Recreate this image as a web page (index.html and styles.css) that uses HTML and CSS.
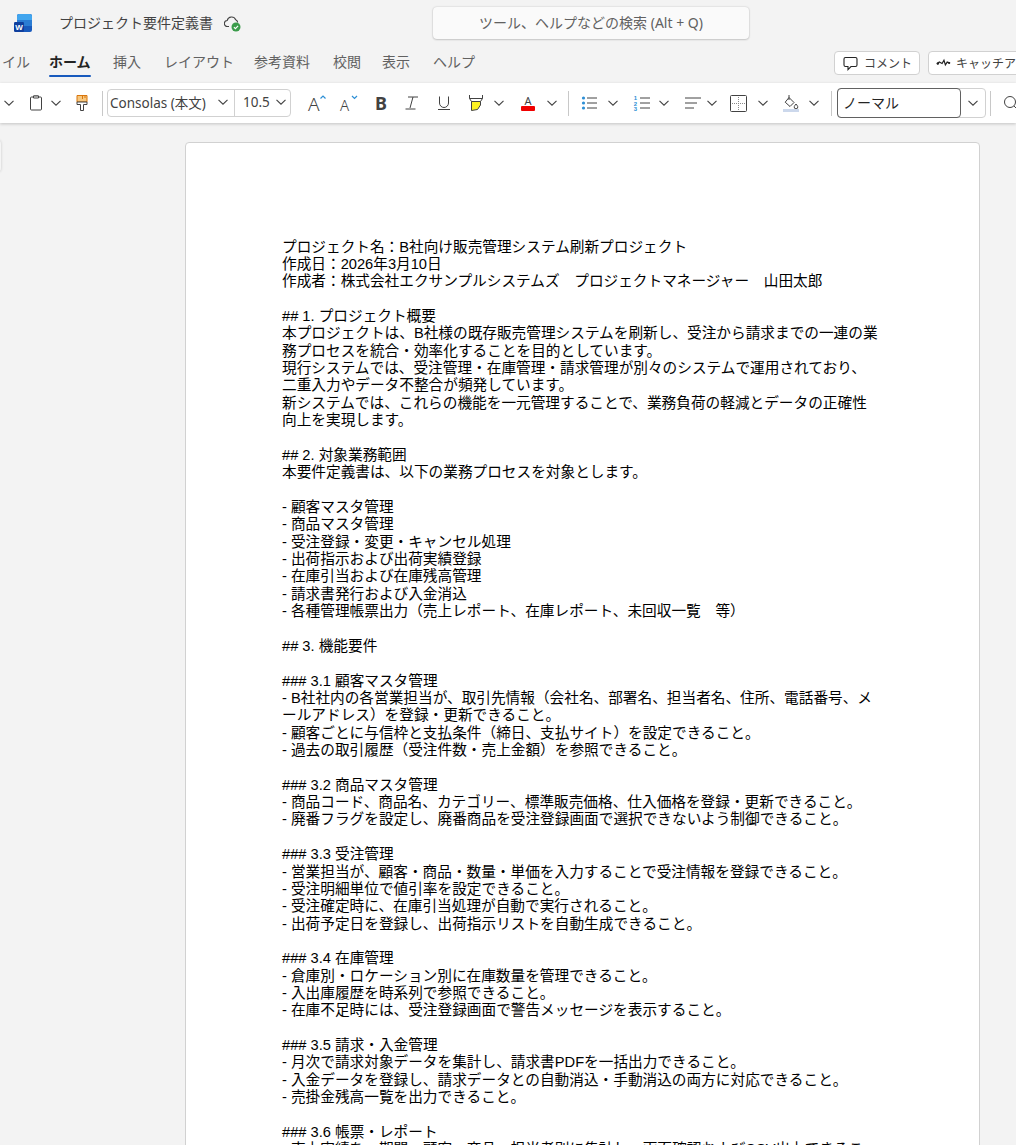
FILE: index.html
```html
<!DOCTYPE html>
<html lang="ja">
<head>
<meta charset="utf-8">
<title>プロジェクト要件定義書</title>
<link rel="stylesheet" href="styles.css">
</head>
<body>
<svg class="defs" width="0" height="0" aria-hidden="true">
  <symbol id="chev" viewBox="0 0 12 12"><path d="M1.500 3.800 6 8.200l4.500-4.400" fill="none" stroke="#424242" stroke-width="1.100"/></symbol>
</svg>
<div class="app">
  <header class="titlebar">
    <svg class="logo" width="18" height="18" viewBox="0 0 18 18">
      <rect x="3" y="0" width="15" height="18" rx="2" fill="#185abd"/>
      <path d="M3 2a2 2 0 0 1 2-2h11a2 2 0 0 1 2 2v4H3z" fill="#41a5ee"/>
      <rect x="3" y="6" width="15" height="6" fill="#2b7cd3"/>
      <rect x="0" y="8" width="10" height="10" rx="1.200" fill="#0f3f9e"/>
      <text x="5" y="16" class="logo-w">W</text>
    </svg>
    <span class="doc-title">プロジェクト要件定義書</span>
    <svg class="cloud" width="17" height="17" viewBox="0 0 17 17">
      <path d="M5 11.500H3.500a3 3 0 0 1-.3-6 4.500 4.500 0 0 1 8.500-.8 3.300 3.300 0 0 1 2 2.800" fill="none" stroke="#424242" stroke-width="1.100"/>
      <circle cx="12" cy="12" r="4.500" fill="#3a9b4a"/>
      <path d="M9.900 12.100l1.500 1.500 2.700-2.800" fill="none" stroke="#fff" stroke-width="1.100"/>
    </svg>
    <div class="search">ツール、ヘルプなどの検索 (Alt + Q)</div>
  </header>

  <nav class="tabs">
    <span class="tab tab-file">イル</span>
    <span class="tab tab-home">ホーム</span>
    <span class="tab tab-insert">挿入</span>
    <span class="tab tab-layout">レイアウト</span>
    <span class="tab tab-ref">参考資料</span>
    <span class="tab tab-review">校閲</span>
    <span class="tab tab-view">表示</span>
    <span class="tab tab-help">ヘルプ</span>
    <div class="actions">
      <button class="action action-comment">
        <svg width="17" height="17" viewBox="0 0 17 17"><path d="M3.500 2.500h10a1.500 1.500 0 0 1 1.500 1.500v6a1.500 1.500 0 0 1-1.500 1.500H9L6 14.600v-3.100H3.500A1.500 1.500 0 0 1 2 10V4a1.500 1.500 0 0 1 1.500-1.500z" fill="none" stroke="#242424" stroke-width="1.100"/></svg>
        <span>コメント</span>
      </button>
      <button class="action action-catch">
        <svg width="16" height="12" viewBox="0 0 16 12"><path d="M1 7l2.500-2 3 1.500L8.500 3 10 8l2-3 3 1" fill="none" stroke="#242424" stroke-width="1.300"/><circle cx="2" cy="6.500" r="1.300" fill="#242424"/><circle cx="14" cy="6" r="1.200" fill="#242424"/></svg>
        <span>キャッチアップ</span>
      </button>
    </div>
  </nav>

  <div class="toolbar">
    <svg class="chev ml-3"><use href="#chev"/></svg>
    <svg class="ml-14" width="14" height="16" viewBox="0 0 14 16"><path d="M2.500 2H4.500V1h5v1h2A1 1 0 0 1 12.500 3v11a1 1 0 0 1-1 1h-9a1 1 0 0 1-1-1V3a1 1 0 0 1 1-1z" fill="none" stroke="#424242"/><path d="M4.500 1h5v2h-5z" fill="#fff" stroke="#424242"/></svg>
    <svg class="chev ml-7"><use href="#chev"/></svg>
    <svg class="ml-14" width="12" height="16" viewBox="0 0 12 16"><path d="M1 .5h10V7H1z" fill="#f7c77e" stroke="#d9760c"/><path d="M1 7h10v2.500H7.500v6h-3v-6H1z" fill="#fff" stroke="#424242"/><path d="M6.500 1v3M9 1v2" stroke="#d9760c"/></svg>
    <i class="divider ml-14"></i>
    <div class="font-box ml-4">
      <span class="font-name">Consolas (本文)<svg class="chev"><use href="#chev"/></svg></span>
      <span class="font-size">10.5<svg class="chev"><use href="#chev"/></svg></span>
    </div>
    <svg class="ml-17 icon-wide" viewBox="0 0 20 18"><text x="0" y="17" class="icon-a big">A</text><path d="M12.500 4.500 15 2l2.500 2.500" fill="none" stroke="#2d8fd5" stroke-width="1.200"/></svg>
    <svg class="ml-12 icon-wide" viewBox="0 0 20 18"><text x="0" y="17" class="icon-a">A</text><path d="M12 2l2.500 2.500L17 2" fill="none" stroke="#2d8fd5" stroke-width="1.200"/></svg>
    <span class="glyph glyph-b ml-15">B</span>
    <svg class="ml-18" width="16" height="16" viewBox="0 0 16 16"><path d="M4 2h10M9 2 6 13M1.500 14h10" fill="none" stroke="#424242" stroke-width="1"/></svg>
    <svg class="ml-16" width="16" height="16" viewBox="0 0 16 16"><path d="M3.500 1.500V8a4.500 4.500 0 0 0 9 0V1.500M2 14.500h12" fill="none" stroke="#424242"/></svg>
    <svg class="ml-16" width="16" height="18" viewBox="0 0 16 18"><path d="M1.500 1v3.500l2 3h9l2-3V1M1.500 4.500h13" fill="none" stroke="#424242"/><path d="M3.500 7.500h9V11l-3 4.500-6 1z" fill="#fdf223" stroke="#424242"/></svg>
    <svg class="chev ml-9"><use href="#chev"/></svg>
    <svg class="ml-15 icon-color" viewBox="0 0 16 16"><text x="8" y="9.500" class="icon-a-small">A</text><rect x="1" y="11" width="14" height="5" rx="1" fill="#f00000"/></svg>
    <svg class="chev ml-10"><use href="#chev"/></svg>
    <i class="divider ml-10"></i>
    <svg class="ml-12" width="16" height="16" viewBox="0 0 16 16"><circle cx="2.500" cy="3" r="1.600" fill="#2d8fd5"/><circle cx="2.500" cy="8" r="1.600" fill="#2d8fd5"/><circle cx="2.500" cy="13" r="1.600" fill="#2d8fd5"/><path d="M6 3h10M6 8h10M6 13h10" stroke="#424242"/></svg>
    <svg class="chev ml-10"><use href="#chev"/></svg>
    <svg class="ml-14" width="17" height="16" viewBox="0 0 17 16"><text x="2.500" y="5" class="icon-num">1</text><text x="2.500" y="10.500" class="icon-num">2</text><text x="2.500" y="16" class="icon-num">3</text><path d="M7 3h10M7 8h10M7 13h10" stroke="#424242"/></svg>
    <svg class="chev ml-8"><use href="#chev"/></svg>
    <svg class="ml-15" width="17" height="16" viewBox="0 0 17 16"><path d="M0 3h16M0 8h12M0 13h9" stroke="#424242"/></svg>
    <svg class="chev ml-4"><use href="#chev"/></svg>
    <svg class="ml-12" width="17" height="17" viewBox="0 0 17 17"><rect x=".5" y=".5" width="16" height="16" rx="1" fill="none" stroke="#424242"/><path d="M8.500 2v13M2 8.500h13" stroke="#8a8a8a" stroke-dasharray="1 1"/></svg>
    <svg class="chev ml-10"><use href="#chev"/></svg>
    <svg class="ml-14" width="17" height="18" viewBox="0 0 17 18"><path d="M6 3.500 11 8.500 7 12.500 2.200 8.200z" fill="none" stroke="#424242"/><path d="M6 1v5" stroke="#424242"/><path d="M13 10c1.200 1.500 1.800 2.300 1.800 3a1.800 1.800 0 0 1-3.600 0c0-.7.600-1.500 1.800-3z" fill="none" stroke="#424242"/><rect x="0" y="15" width="16" height="3" fill="#ccd8ec"/></svg>
    <svg class="chev ml-8"><use href="#chev"/></svg>
    <i class="divider ml-11"></i>
    <div class="style-box ml-5">
      <span class="style-name">ノーマル</span>
      <span class="style-drop"><svg class="chev"><use href="#chev"/></svg></span>
    </div>
    <i class="divider ml-4"></i>
    <svg class="ml-12" width="16" height="16" viewBox="0 0 16 16"><circle cx="7" cy="7" r="5.500" fill="none" stroke="#424242"/><path d="M11 11l4.500 4.500" stroke="#424242"/></svg>
  </div>

  <main class="canvas">
    <div class="side-handle"></div>
    <article class="page">
      <p>プロジェクト名：B社向け販売管理システム刷新プロジェクト</p>
      <p>作成日：2026年3月10日</p>
      <p>作成者：株式会社エクサンプルシステムズ　プロジェクトマネージャー　山田太郎</p>
      <p class="blank"></p>
      <p>## 1. プロジェクト概要</p>
      <p>本プロジェクトは、B社様の既存販売管理システムを刷新し、受注から請求までの一連の業務プロセスを統合・効率化することを目的としています。</p>
      <p>現行システムでは、受注管理・在庫管理・請求管理が別々のシステムで運用されており、二重入力やデータ不整合が頻発しています。</p>
      <p>新システムでは、これらの機能を一元管理することで、業務負荷の軽減とデータの正確性向上を実現します。</p>
      <p class="blank"></p>
      <p>## 2. 対象業務範囲</p>
      <p>本要件定義書は、以下の業務プロセスを対象とします。</p>
      <p class="blank"></p>
      <p>- 顧客マスタ管理</p>
      <p>- 商品マスタ管理</p>
      <p>- 受注登録・変更・キャンセル処理</p>
      <p>- 出荷指示および出荷実績登録</p>
      <p>- 在庫引当および在庫残高管理</p>
      <p>- 請求書発行および入金消込</p>
      <p>- 各種管理帳票出力（売上レポート、在庫レポート、未回収一覧　等）</p>
      <p class="blank"></p>
      <p>## 3. 機能要件</p>
      <p class="blank"></p>
      <p>### 3.1 顧客マスタ管理</p>
      <p>- B社社内の各営業担当が、取引先情報（会社名、部署名、担当者名、住所、電話番号、メールアドレス）を登録・更新できること。</p>
      <p>- 顧客ごとに与信枠と支払条件（締日、支払サイト）を設定できること。</p>
      <p>- 過去の取引履歴（受注件数・売上金額）を参照できること。</p>
      <p class="blank"></p>
      <p>### 3.2 商品マスタ管理</p>
      <p>- 商品コード、商品名、カテゴリー、標準販売価格、仕入価格を登録・更新できること。</p>
      <p>- 廃番フラグを設定し、廃番商品を受注登録画面で選択できないよう制御できること。</p>
      <p class="blank"></p>
      <p>### 3.3 受注管理</p>
      <p>- 営業担当が、顧客・商品・数量・単価を入力することで受注情報を登録できること。</p>
      <p>- 受注明細単位で値引率を設定できること。</p>
      <p>- 受注確定時に、在庫引当処理が自動で実行されること。</p>
      <p>- 出荷予定日を登録し、出荷指示リストを自動生成できること。</p>
      <p class="blank"></p>
      <p>### 3.4 在庫管理</p>
      <p>- 倉庫別・ロケーション別に在庫数量を管理できること。</p>
      <p>- 入出庫履歴を時系列で参照できること。</p>
      <p>- 在庫不足時には、受注登録画面で警告メッセージを表示すること。</p>
      <p class="blank"></p>
      <p>### 3.5 請求・入金管理</p>
      <p>- 月次で請求対象データを集計し、請求書PDFを一括出力できること。</p>
      <p>- 入金データを登録し、請求データとの自動消込・手動消込の両方に対応できること。</p>
      <p>- 売掛金残高一覧を出力できること。</p>
      <p class="blank"></p>
      <p>### 3.6 帳票・レポート</p>
      <p>- 売上実績を、期間・顧客・商品・担当者別に集計し、画面確認およびCSV出力できること。</p>
    </article>
  </main>
</div>
</body>
</html>
```
FILE: styles.css
```css
* { box-sizing: border-box; }
html, body { margin: 0; padding: 0; height: 1145px; overflow: hidden; }
body { background: #f3f3f3; font-family: "Noto Sans", "Noto Sans CJK JP", sans-serif; color: #242424; }
.defs { display: block; height: 0; }
.app { width: 1016px; height: 1145px; display: flex; flex-direction: column; overflow: hidden; }

.titlebar { height: 46px; flex: none; display: flex; align-items: center; padding-left: 14px; position: relative; }
.logo { flex: none; }
.logo-w { font: 700 8px "Liberation Sans", sans-serif; fill: #fff; text-anchor: middle; }
.doc-title { margin-left: 27px; padding-bottom: 2px; font-size: 14px; color: #424242; width: 154px; white-space: nowrap; }
.cloud { margin-left: 11px; flex: none; }
.search { position: absolute; left: 433px; top: 7px; width: 316px; height: 32px; padding-bottom: 2px; display: flex; align-items: center; justify-content: center; font-size: 14px; color: #616161; background: #fafafa; border-radius: 4px; box-shadow: 0 0 2px rgba(0,0,0,.2), 0 1px 2px rgba(0,0,0,.14); }

.tabs { height: 37px; flex: none; display: flex; align-items: flex-start; position: relative; font-size: 14px; color: #616161; }
.tab { display: block; line-height: 20px; padding-top: 6px; white-space: nowrap; }
.tab-file { width: 47px; margin-left: 2px; }
.tab-home { width: 64px; font-weight: 700; color: #242424; position: relative; }
.tab-home::after { content: ""; position: absolute; left: 0; top: 29px; width: 42px; height: 2px; background: #185abd; border-radius: 1px; }
.tab-insert { width: 51px; }
.tab-layout { width: 90px; }
.tab-ref { width: 79px; }
.tab-review { width: 49px; }
.tab-view { width: 51px; }
.actions { position: absolute; left: 834px; top: 5px; display: flex; gap: 8px; }
.action { height: 24px; display: flex; align-items: center; gap: 5px; padding: 0 7px; background: #fff; border: 1px solid #d1d1d1; border-radius: 4px; font: 12px "Noto Sans", "Noto Sans CJK JP", sans-serif; color: #424242; white-space: nowrap; }
.action-comment { width: 86px; }
.action-catch { width: 120px; }

.toolbar { height: 40px; flex: none; background: #fff; display: flex; align-items: center; box-shadow: 0 1px 3px rgba(0,0,0,.2); position: relative; z-index: 1; white-space: nowrap; }
.toolbar > svg { flex: none; }
.chev { width: 12px; height: 12px; flex: none; }
.icon-wide { width: 20px; height: 18px; overflow: visible; }
.icon-color { width: 16px; height: 16px; overflow: visible; }
.divider { display: block; width: 1px; height: 25px; background: #c8c8c8; flex: none; }
.ml-3 { margin-left: 3px; } .ml-4 { margin-left: 4px; } .ml-5 { margin-left: 5px; } .ml-7 { margin-left: 7px; } .ml-8 { margin-left: 8px; } .ml-9 { margin-left: 9px; } .ml-10 { margin-left: 10px; } .ml-11 { margin-left: 11px; } .ml-12 { margin-left: 12px; } .ml-14 { margin-left: 14px; } .ml-15 { margin-left: 15px; } .ml-16 { margin-left: 16px; } .ml-17 { margin-left: 17px; } .ml-18 { margin-left: 18px; }

.font-box { width: 184px; height: 28px; display: flex; border: 1px solid #d1d1d1; border-radius: 4px; font-size: 13.500px; color: #424242; flex: none; }
.font-name { width: 127px; display: flex; align-items: center; justify-content: space-between; padding: 0 5px 2px 2px; border-right: 1px solid #d1d1d1; }
.font-size { flex: 1; display: flex; align-items: center; justify-content: space-between; padding: 0 3px 2px 8px; }
.icon-a { font: 300 15px "Noto Sans", sans-serif; fill: #424242; }
.icon-a.big { font-size: 19px; }
.icon-a-small { font: 400 11px "Noto Sans", sans-serif; fill: #424242; text-anchor: middle; }
.icon-num { font: 700 6px "Liberation Sans", sans-serif; fill: #2d8fd5; text-anchor: middle; }
.glyph { display: block; line-height: 20px; color: #424242; flex: none; }
.glyph-b { width: 11px; font: 700 18px/20px "Noto Sans", sans-serif; }

.style-box { width: 149px; height: 30px; display: flex; border: 1px solid #d1d1d1; border-radius: 4px; flex: none; }
.style-name { width: 124px; margin: -1px 0 -1px -1px; display: flex; align-items: center; padding: 0 0 2px 5px; border: 1.500px solid #616161; border-radius: 4px; font-size: 14px; color: #242424; }
.style-drop { flex: 1; display: flex; align-items: center; justify-content: center; }

.canvas { flex: 1; min-height: 0; position: relative; padding: 19px 36px 0 185px; overflow: hidden; }
.side-handle { position: absolute; left: -7px; top: 17px; width: 8px; height: 32px; background: #f5f5f5; border-radius: 4px; box-shadow: 0 0 3px rgba(0,0,0,.18); }
.page { width: 795px; height: 1200px; flex: none; background: #fff; border: 1px solid #d1d1d1; border-radius: 4px; padding: 95.600px 99px 0 96px; font-family: "Liberation Sans", "Noto Sans CJK JP", sans-serif; font-size: 14.670px; line-height: 17.360px; color: #000; text-spacing-trim: space-all; }
.page p { margin: 0; min-height: 17.360px; }
```
